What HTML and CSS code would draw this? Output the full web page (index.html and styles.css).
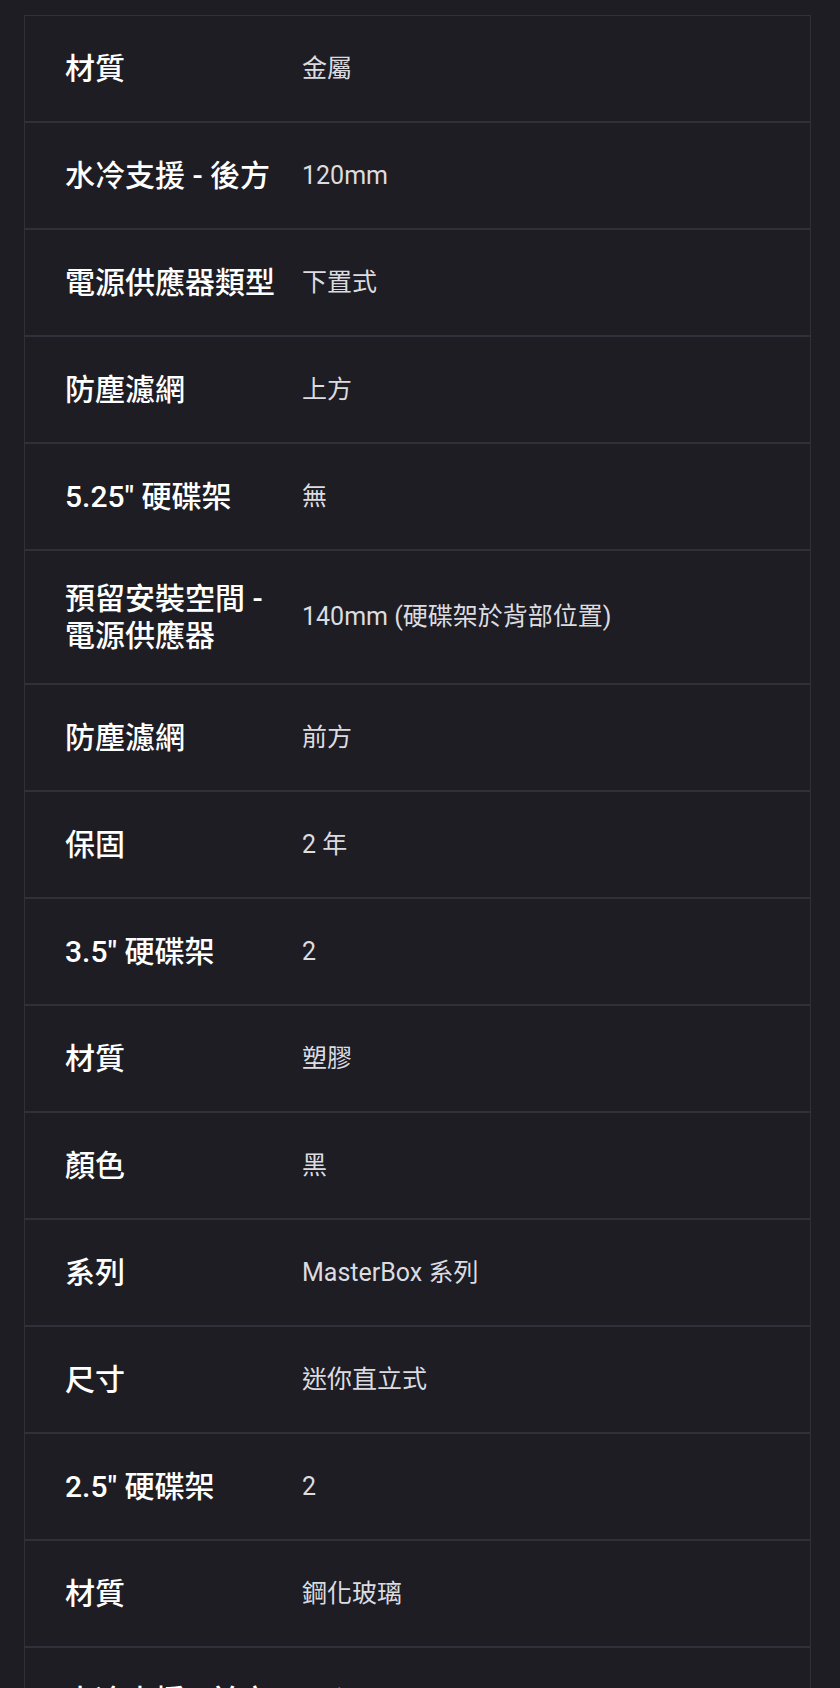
FILE: index.html
```html
<!DOCTYPE html>
<html lang="zh-Hant">
<head>
<meta charset="utf-8">
<title>規格</title>
<link rel="stylesheet" href="styles.css">
</head>
<body>
<main class="page">
  <section class="specs">
    <div class="spec-row"><div class="spec-label">材質</div><div class="spec-value">金屬</div></div>
    <div class="spec-row"><div class="spec-label">水冷支援 - 後方</div><div class="spec-value">120mm</div></div>
    <div class="spec-row"><div class="spec-label">電源供應器類型</div><div class="spec-value">下置式</div></div>
    <div class="spec-row"><div class="spec-label">防塵濾網</div><div class="spec-value">上方</div></div>
    <div class="spec-row"><div class="spec-label">5.25" 硬碟架</div><div class="spec-value">無</div></div>
    <div class="spec-row"><div class="spec-label">預留安裝空間 - 電源供應器</div><div class="spec-value">140mm (硬碟架於背部位置)</div></div>
    <div class="spec-row"><div class="spec-label">防塵濾網</div><div class="spec-value">前方</div></div>
    <div class="spec-row"><div class="spec-label">保固</div><div class="spec-value">2 年</div></div>
    <div class="spec-row"><div class="spec-label">3.5" 硬碟架</div><div class="spec-value">2</div></div>
    <div class="spec-row"><div class="spec-label">材質</div><div class="spec-value">塑膠</div></div>
    <div class="spec-row"><div class="spec-label">顏色</div><div class="spec-value">黑</div></div>
    <div class="spec-row"><div class="spec-label">系列</div><div class="spec-value">MasterBox 系列</div></div>
    <div class="spec-row"><div class="spec-label">尺寸</div><div class="spec-value">迷你直立式</div></div>
    <div class="spec-row"><div class="spec-label">2.5" 硬碟架</div><div class="spec-value">2</div></div>
    <div class="spec-row"><div class="spec-label">材質</div><div class="spec-value">鋼化玻璃</div></div>
    <div class="spec-row"><div class="spec-label">水冷支援 - 前方</div><div class="spec-value">上方</div></div>
  </section>
</main>
</body>
</html>
```
FILE: styles.css
```css
html, body {
  margin: 0;
  padding: 0;
  background: #1d1d23;
}

body {
  font-family: Roboto, "Noto Sans CJK TC", "Noto Sans", sans-serif;
  color: #ffffff;
}

.page {
  padding: 15px 29px 40px 24px;
}

.specs {
  border: 1px solid #30303a;
  border-bottom: none;
}

.spec-row {
  display: grid;
  grid-template-columns: 277px 1fr;
  align-items: center;
  min-height: 105px;
  border-top: 2px solid #30303a;
}

.spec-row:first-child {
  border-top: none;
}

.spec-label {
  padding: 29px 8px 29px 40px;
  font-size: 30px;
  line-height: 37px;
  font-weight: 500;
  color: #ffffff;
}

.spec-value {
  padding: 20px 40px 20px 0;
  font-size: 25px;
  line-height: 32px;
  font-weight: 400;
  color: #dcdce0;
}
```
